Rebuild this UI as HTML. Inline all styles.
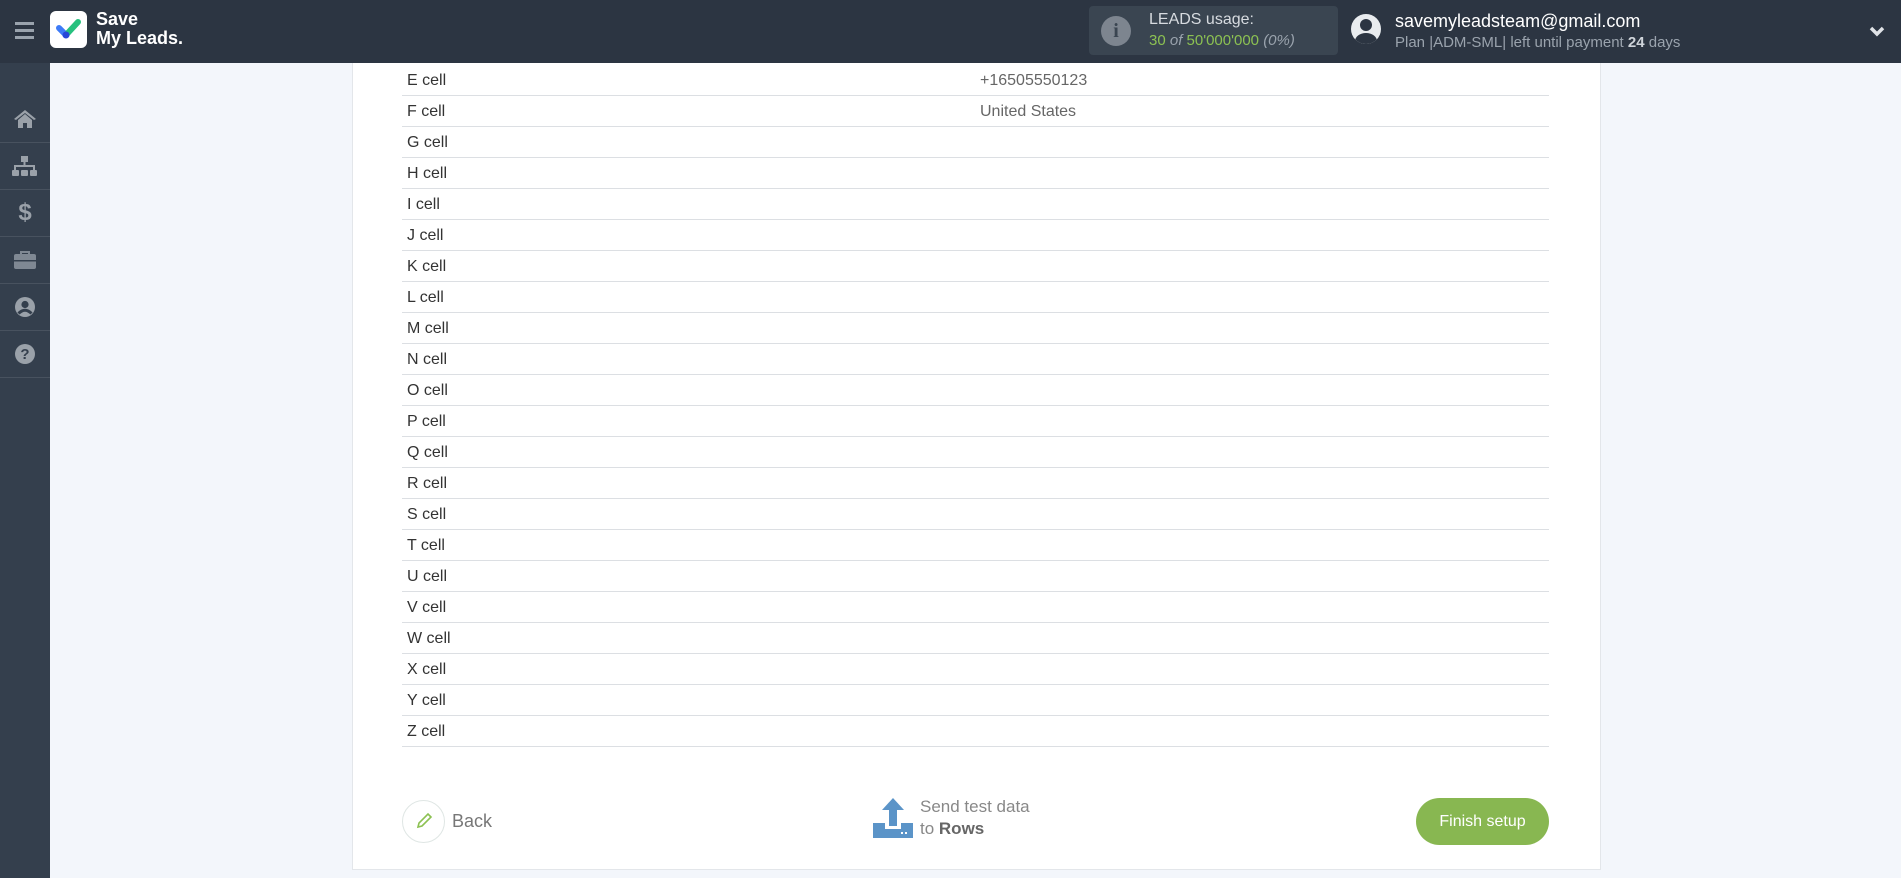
<!DOCTYPE html>
<html><head><meta charset="utf-8"><style>
*{margin:0;padding:0;box-sizing:border-box}
body{width:1901px;height:878px;overflow:hidden;background:#f3f6fb;font-family:"Liberation Sans",sans-serif;position:relative}
.hdr{position:absolute;left:0;top:0;width:1901px;height:63px;background:#2c3542}
.side{position:absolute;left:0;top:63px;width:50px;height:815px;background:#343f4d;padding-top:33px}
.side .it{height:47px;border-bottom:1px solid #48525f;display:flex;align-items:center;justify-content:center}
.card{position:absolute;left:352px;top:40px;width:1249px;height:830px;background:#fff;border:1px solid #e3e6ea}
.row{position:absolute;left:402px;width:1147px;height:31px;border-bottom:1px solid #dcdfe3;font-size:16px;color:#333;line-height:31px}
.row span{position:absolute;left:5px}
.row b{position:absolute;left:578px;font-weight:normal;color:#666}
</style></head><body>
<div class="card"></div>
<div class="hdr">
 <div style="position:absolute;left:15px;top:22px;width:19px;height:3px;background:#9aa3ad;box-shadow:0 7px 0 #9aa3ad,0 14px 0 #9aa3ad"></div>
 <div style="position:absolute;left:50px;top:11px;width:37px;height:37px;background:#fff;border-radius:6px">
  <svg width="37" height="37" viewBox="0 0 37 37"><path d="M9 17 L16 24" stroke="#3d7bf7" stroke-width="6" stroke-linecap="round"/><path d="M16 24 L28 11" stroke="#27c17e" stroke-width="6" stroke-linecap="round"/><circle cx="16" cy="24" r="3.5" fill="#2747d8"/></svg>
 </div>
 <div style="position:absolute;left:96px;top:10px;color:#fff;font-weight:bold;font-size:18px;line-height:19px">Save<br>My Leads.</div>
 <div style="position:absolute;left:1089px;top:6px;width:249px;height:49px;background:#3a4551;border-radius:4px">
  <div style="position:absolute;left:12px;top:10px;width:30px;height:30px;border-radius:50%;background:#7d858f;color:#3a4551;font-weight:bold;font-size:20px;text-align:center;line-height:30px;font-family:'Liberation Serif',serif">i</div>
  <div style="position:absolute;left:60px;top:5px;color:#d7dbe0;font-size:16px">LEADS usage:</div>
  <div style="position:absolute;left:60px;top:26px;color:#8cc152;font-size:15px">30 <i style="color:#9aa3ad">of</i> 50'000'000 <i style="color:#9aa3ad">(0%)</i></div>
 </div>
 <div style="position:absolute;left:1351px;top:14px;width:30px;height:30px;border-radius:50%;background:#e9ecef;overflow:hidden">
  <div style="position:absolute;left:9px;top:5px;width:12px;height:12px;border-radius:50%;background:#2c3542"></div>
  <div style="position:absolute;left:4px;top:19px;width:22px;height:16px;border-radius:50%;background:#2c3542"></div>
 </div>
 <div style="position:absolute;left:1395px;top:11px;color:#fff;font-size:18px">savemyleadsteam@gmail.com</div>
 <div style="position:absolute;left:1395px;top:34px;color:#9aa3ad;font-size:15px">Plan |ADM-SML| left until payment <b style="color:#cfd4da">24</b> days</div>
 <svg style="position:absolute;left:1869px;top:25px" width="16" height="12" viewBox="0 0 16 12"><path d="M2 3 L8 9 L14 3" stroke="#e0e3e7" stroke-width="3.5" fill="none"/></svg>
</div>
<div class="side">
 <div class="it"><svg width="24" height="22" viewBox="0 0 24 22"><path d="M12 2 L1 11 L3 12 L12 5 L21 12 L23 11 Z M5 12 V20 H10 V15 H14 V20 H19 V12 L12 6 Z" fill="#9aa1a9"/></svg></div>
 <div class="it"><svg width="28" height="22" viewBox="0 0 28 22"><rect x="10" y="1" width="7" height="6" fill="#9aa1a9"/><path d="M13.5 7V11M4 15V11H23V15" stroke="#9aa1a9" stroke-width="2" fill="none"/><rect x="1" y="15" width="7" height="6" rx="1" fill="#9aa1a9"/><rect x="10" y="15" width="7" height="6" rx="1" fill="#9aa1a9"/><rect x="19" y="15" width="7" height="6" rx="1" fill="#9aa1a9"/></svg></div>
 <div class="it" style="color:#9aa1a9;font-weight:bold;font-size:24px">$</div>
 <div class="it"><svg width="24" height="20" viewBox="0 0 24 20"><path d="M8 4V2H16V4" stroke="#7f8893" stroke-width="2" fill="none"/><rect x="1" y="4" width="22" height="15" rx="2" fill="#7f8893"/><rect x="1" y="10" width="22" height="1.5" fill="#343f4d"/></svg></div>
 <div class="it"><svg width="22" height="22" viewBox="0 0 22 22"><circle cx="11" cy="11" r="10" fill="#9aa1a9"/><circle cx="11" cy="8.5" r="3.6" fill="#343f4d"/><path d="M4.5 17.5 Q11 11 17.5 17.5" stroke="#343f4d" stroke-width="3" fill="none"/></svg></div>
 <div class="it"><svg width="22" height="22" viewBox="0 0 22 22"><circle cx="11" cy="11" r="10" fill="#9aa1a9"/><text x="11" y="16" text-anchor="middle" font-family="Liberation Sans" font-weight="bold" font-size="15" fill="#343f4d">?</text></svg></div>
</div>
<div class="row" style="top:65px"><span>E cell</span><b>+16505550123</b></div>
<div class="row" style="top:96px"><span>F cell</span><b>United States</b></div>
<div class="row" style="top:127px"><span>G cell</span></div>
<div class="row" style="top:158px"><span>H cell</span></div>
<div class="row" style="top:189px"><span>I cell</span></div>
<div class="row" style="top:220px"><span>J cell</span></div>
<div class="row" style="top:251px"><span>K cell</span></div>
<div class="row" style="top:282px"><span>L cell</span></div>
<div class="row" style="top:313px"><span>M cell</span></div>
<div class="row" style="top:344px"><span>N cell</span></div>
<div class="row" style="top:375px"><span>O cell</span></div>
<div class="row" style="top:406px"><span>P cell</span></div>
<div class="row" style="top:437px"><span>Q cell</span></div>
<div class="row" style="top:468px"><span>R cell</span></div>
<div class="row" style="top:499px"><span>S cell</span></div>
<div class="row" style="top:530px"><span>T cell</span></div>
<div class="row" style="top:561px"><span>U cell</span></div>
<div class="row" style="top:592px"><span>V cell</span></div>
<div class="row" style="top:623px"><span>W cell</span></div>
<div class="row" style="top:654px"><span>X cell</span></div>
<div class="row" style="top:685px"><span>Y cell</span></div>
<div class="row" style="top:716px"><span>Z cell</span></div>
<div style="position:absolute;left:402px;top:800px;width:43px;height:43px;border:1.5px solid #dfe6e4;border-radius:50%">
 <svg style="position:absolute;left:11px;top:10px" width="20" height="20" viewBox="0 0 20 20"><path d="M4 16 L5 12 L14 3 L17 6 L8 15 Z" stroke="#8cc152" stroke-width="1.6" fill="none"/></svg>
</div>
<div style="position:absolute;left:452px;top:811px;font-size:18px;color:#777">Back</div>
<svg style="position:absolute;left:873px;top:798px" width="40" height="40" viewBox="0 0 40 40"><path d="M20 0 L31 12 H24 V28 H16 V12 H9 Z" fill="#5b94c8"/><path d="M0 25 H12 V31 H28 V25 H40 V40 H0 Z" fill="#5b94c8"/><rect x="28" y="34" width="2" height="2" fill="#fff"/><rect x="32" y="34" width="2" height="2" fill="#fff"/></svg>
<div style="position:absolute;left:920px;top:796px;font-size:17px;color:#888;line-height:22px">Send test data<br>to <b style="color:#666">Rows</b></div>
<div style="position:absolute;left:1416px;top:798px;width:133px;height:47px;border-radius:24px;background:#88b751;color:#fff;font-size:16px;text-align:center;line-height:47px">Finish setup</div>
</body></html>
